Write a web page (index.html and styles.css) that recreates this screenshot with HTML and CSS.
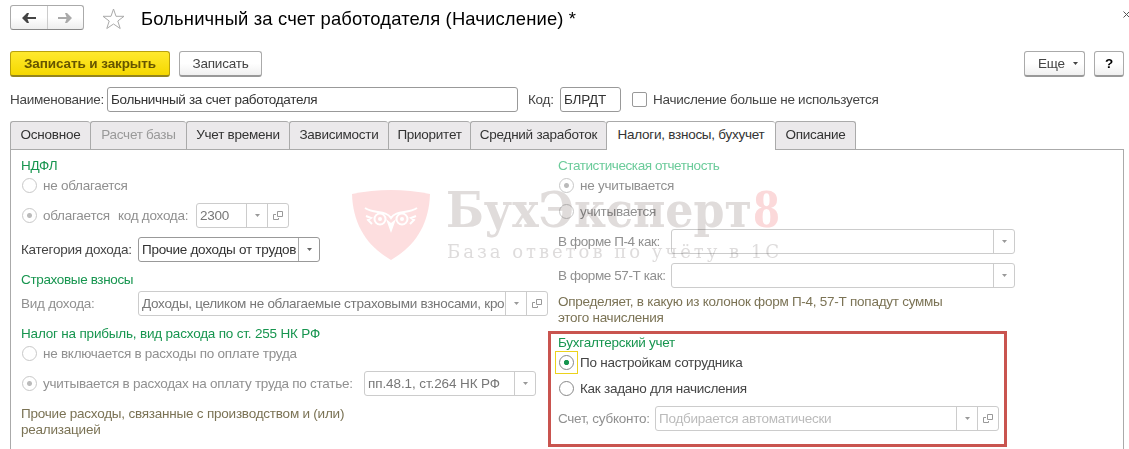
FILE: index.html
```
<!DOCTYPE html>
<html lang="ru">
<head>
    <meta charset="UTF-8">
    <title>Больничный за счет работодателя (Начисление)</title>
    <link rel="stylesheet" href="styles.css">
</head>
<body>
    <svg width="0" height="0" class="defs">
        <symbol id="open" viewBox="0 0 10 9">
            <path d="M4.5 .5h5v5h-5zM3 3.5H.5v5h5V7" fill="none" stroke="currentColor"/>
        </symbol>
        <symbol id="drop" viewBox="0 0 5 3">
            <path d="M0 0h5L2.5 3z" fill="currentColor"/>
        </symbol>
    </svg>

    <div class="header">
        <div class="nav">
            <div class="nav-button"><svg width="14" height="10" viewBox="0 0 14 10"><path d="M0 5 5 0H7L5.5 4H14V6H5.5L7 10H5z" fill="#444"/></svg></div>
            <div class="nav-button"><svg width="14" height="10" viewBox="0 0 14 10"><path d="M14 5 9 0H7L8.5 4H0V6H8.5L7 10H9z" fill="#aaa"/></svg></div>
        </div>
        <svg class="star" width="23" height="22" viewBox="0 0 23 22"><path d="M11.5 1 14 8.3H22L15.8 13 18.2 20.5 11.5 16 4.8 20.5 7.2 13 1 8.3H9z" fill="#fff" stroke="#aaa"/></svg>
        <div class="title">Больничный за счет работодателя (Начисление) *</div>
        <svg class="close" width="7" height="7" viewBox="0 0 7 7"><path d="M.5 .5l6 6M6.5 .5l-6 6" stroke="#555"/></svg>
    </div>

    <div class="toolbar">
        <div class="button primary">Записать и закрыть</div>
        <div class="button save">Записать</div>
        <div class="button more">Еще <svg width="5" height="3"><use href="#drop"/></svg></div>
        <div class="button help">?</div>
    </div>

    <div class="name-row">
        <span class="name-label">Наименование:</span>
        <div class="field name"><span class="value">Больничный за счет работодателя</span></div>
        <span class="code-label">Код:</span>
        <div class="field code"><span class="value">БЛРДТ</span></div>
        <div class="checkbox"></div>
        <span>Начисление больше не используется</span>
    </div>

    <div class="tabs">
        <div class="tab t1">Основное</div>
        <div class="tab t2 off">Расчет базы</div>
        <div class="tab t3">Учет времени</div>
        <div class="tab t4">Зависимости</div>
        <div class="tab t5">Приоритет</div>
        <div class="tab t6">Средний заработок</div>
        <div class="tab t7 active">Налоги, взносы, бухучет</div>
        <div class="tab t8">Описание</div>
    </div>

    <div class="panel">
        <div class="left">
            <div class="heading">НДФЛ</div>
            <div class="radio-row off"><i class="radio"></i>не облагается</div>
            <div class="row off after-radio">
                <i class="radio checked"></i><span class="taxed">облагается</span><span class="income-code">код дохода:</span>
                <div class="field f-code"><span class="value">2300</span><b><svg width="5" height="3"><use href="#drop"/></svg></b><b><svg width="10" height="9"><use href="#open"/></svg></b></div>
            </div>
            <div class="row category">
                <span class="label">Категория дохода:</span>
                <div class="field f-category"><span class="value">Прочие доходы от трудов</span><b><svg width="5" height="3"><use href="#drop"/></svg></b></div>
            </div>
            <div class="heading insurance">Страховые взносы</div>
            <div class="row off income">
                <span class="label">Вид дохода:</span>
                <div class="field f-income"><span class="value">Доходы, целиком не облагаемые страховыми взносами, кро</span><b><svg width="5" height="3"><use href="#drop"/></svg></b><b><svg width="10" height="9"><use href="#open"/></svg></b></div>
            </div>
            <div class="heading profit">Налог на прибыль, вид расхода по ст. 255 НК РФ</div>
            <div class="radio-row off"><i class="radio"></i>не включается в расходы по оплате труда</div>
            <div class="row off after-radio">
                <i class="radio checked"></i><span class="article">учитывается в расходах на оплату труда по статье:</span>
                <div class="field f-article"><span class="value">пп.48.1, ст.264 НК РФ</span><b><svg width="5" height="3"><use href="#drop"/></svg></b></div>
            </div>
            <div class="note expenses">Прочие расходы, связанные с производством и (или)<br>реализацией</div>
        </div>

        <div class="right">
            <div class="heading pale">Статистическая отчетность</div>
            <div class="radio-row off"><i class="radio checked"></i>не учитывается</div>
            <div class="radio-row off next"><i class="radio"></i>учитывается</div>
            <div class="row off after-radio">
                <span class="form-label">В форме П-4 как:</span>
                <div class="field f-form"><span class="value"></span><b><svg width="5" height="3"><use href="#drop"/></svg></b></div>
            </div>
            <div class="row off form57">
                <span class="form-label">В форме 57-Т как:</span>
                <div class="field f-form"><span class="value"></span><b><svg width="5" height="3"><use href="#drop"/></svg></b></div>
            </div>
            <div class="note forms">Определяет, в какую из колонок форм П-4, 57-Т попадут суммы<br>этого начисления</div>
            <div class="marked">
                <div class="heading">Бухгалтерский учет</div>
                <div class="radio-row"><span class="focus"><i class="radio checked"></i></span>По настройкам сотрудника</div>
                <div class="radio-row next"><i class="radio"></i>Как задано для начисления</div>
                <div class="row off account">
                    <span class="account-label">Счет, субконто:</span>
                    <div class="field f-account"><span class="value">Подбирается автоматически</span><b><svg width="5" height="3"><use href="#drop"/></svg></b><b><svg width="10" height="9"><use href="#open"/></svg></b></div>
                </div>
            </div>
        </div>
    </div>

    <svg class="watermark" width="430" height="76" viewBox="0 0 430 76">
        <path d="M0 4Q39-4 78 4C77 35 63 56 39 70 15 56 1 35 0 4z" fill="#fddedf"/>
        <g fill="none" stroke="#fff" stroke-width="2">
            <path d="M13 18C22 24 34 20 39 28 44 20 56 24 65 18"/>
            <circle cx="28" cy="29" r="5.5"/><circle cx="50" cy="29" r="5.5"/>
            <path d="M14 26l5 2-3 2 4 4M64 26l-5 2 3 2-4 4"/>
        </g>
        <circle cx="28" cy="29" r="2" fill="#fff"/><circle cx="50" cy="29" r="2" fill="#fff"/>
        <path d="M34 29l5 14 5-14-5 4z" fill="#fff"/>
        <text x="94" y="37" class="brand" textLength="306" lengthAdjust="spacingAndGlyphs">БухЭксперт</text>
        <text x="401" y="37" class="brand eight" textLength="27" lengthAdjust="spacingAndGlyphs">8</text>
        <text x="95" y="68" class="slogan" textLength="332">База ответов по учёту в 1С</text>
    </svg>
</body>
</html>
```

FILE: styles.css
```
* {
    box-sizing: border-box;
}
body {
    margin: 0;
    height: 449px;
    overflow: hidden;
    position: relative;
    background-color: #fff;
    color: #444;
    font-family: "Liberation Sans", Arial, sans-serif;
    font-size: 13.5px;
    letter-spacing: -0.26px;
    line-height: 17px;
    white-space: nowrap;
}
.defs {
    position: absolute;
}
.header {
    display: flex;
    height: 39px;
    padding: 5px 0 0 10px;
}
.nav {
    display: flex;
    width: 74px;
    height: 25px;
    border: 1px solid #aaa;
    border-bottom-color: #888;
    border-radius: 3px;
    background: linear-gradient(#fff 50%, #eee);
}
.nav-button {
    flex: 1;
    display: flex;
    align-items: center;
    justify-content: center;
}
.nav-button + .nav-button {
    border-left: 1px solid #ccc;
}
.star {
    margin: 3px 0 0 18px;
}
.title {
    margin: 2px 0 0 16px;
    color: #000;
    font-size: 18.4px;
    line-height: 24px;
    letter-spacing: 0.16px;
}
.close {
    margin: 6px -1px 0 auto;
}
.toolbar {
    display: flex;
    height: 38px;
    padding: 12px 5px 0 10px;
}
.button {
    height: 26px;
    border: 1px solid #aaa;
    border-bottom: 2px solid #999;
    border-radius: 3px;
    background: linear-gradient(#fff 50%, #f0f0f0);
    line-height: 24px;
    text-align: center;
    letter-spacing: -0.2px;
}
.primary {
    width: 160px;
    background: linear-gradient(#ffe92e, #f5d800);
    border-color: #b9a10c;
    border-bottom-color: #94851d;
    color: #665500;
    font-weight: bold;
    letter-spacing: -0.1px;
}
.save {
    width: 83px;
    margin-left: 9px;
}
.more {
    display: flex;
    align-items: center;
    justify-content: center;
    gap: 8px;
    width: 61px;
    margin-left: auto;
    padding-left: 7px;
}
.help {
    width: 30px;
    margin-left: 9px;
    color: #000;
    font-weight: bold;
}
.name-row {
    display: flex;
    align-items: center;
    height: 25px;
    margin: 10px 0 9px 10px;
}
.name-label {
    width: 97px;
}
.code-label {
    width: 42px;
    padding-left: 10px;
}
.field {
    display: flex;
    height: 25px;
    border: 1px solid #999;
    border-radius: 3px;
    background-color: #fff;
    color: #333;
    line-height: 23px;
}
.field .value {
    flex: 1;
    min-width: 0;
    overflow: hidden;
    padding-left: 3px;
}
.field b {
    display: flex;
    align-items: center;
    justify-content: center;
    width: 21px;
    border-left: 1px solid #aaa;
    color: #666;
}
.name {
    width: 411px;
    letter-spacing: -0.32px;
}
.code {
    width: 61px;
}
.checkbox {
    width: 15px;
    height: 15px;
    margin: 0 6px 0 11px;
    border: 1px solid #999;
    border-radius: 2px;
}
.tabs {
    display: flex;
    height: 28px;
    margin-left: 10px;
    color: #333;
}
.tab {
    border: 1px solid #aaa;
    border-right: none;
    border-bottom: none;
    border-radius: 3px 3px 0 0;
    background-color: #ebe9eb;
    line-height: 26px;
    text-align: center;
}
.tab.off {
    color: #999;
}
.tab.active {
    height: 29px;
    background-color: #fff;
    z-index: 1;
}
.t1 { width: 80px; }
.t2 { width: 96px; }
.t3 { width: 103px; }
.t4 { width: 99px; }
.t5 { width: 82px; }
.t6 { width: 136px; }
.t7 { width: 169px; }
.t8 {
    width: 81px;
    border-right: 1px solid #aaa;
}
.panel {
    display: flex;
    width: 1114px;
    height: 310px;
    margin-left: 10px;
    padding: 8px 0 0 10px;
    border: 1px solid #aaa;
    border-bottom: none;
}
.left {
    width: 527px;
}
.right {
    width: 467px;
    padding-left: 10px;
}
.heading {
    height: 16px;
    line-height: 16px;
    color: #17954f;
}
.pale {
    color: #6bcb9a;
    letter-spacing: -0.42px;
}
.row,
.radio-row {
    display: flex;
    align-items: center;
}
.row {
    height: 25px;
}
.radio-row {
    height: 23px;
}
.next {
    margin-top: 3px;
}
.radio {
    flex: none;
    width: 15px;
    height: 15px;
    margin: 0 6px 0 1px;
    border: 1px solid #888;
    border-radius: 50%;
    background: #fff;
}
.radio.checked {
    background: radial-gradient(circle, #17954f 2.2px, #fff 3px);
}
.off {
    color: #909090;
}
.off .radio {
    border-color: #c8c8c8;
}
.off .radio.checked {
    background: radial-gradient(circle, #bbb 2px, #fff 3px);
}
.off .field {
    border-color: #ccc;
    color: #777;
}
.off .field b {
    border-color: #ccc;
    color: #999;
}
.after-radio {
    margin-top: 6px;
}
.taxed {
    width: 75px;
}
.income-code {
    width: 78px;
}
.label {
    width: 117px;
}
.category,
.form57 {
    margin-top: 9px;
}
.insurance,
.profit {
    margin-top: 10px;
}
.insurance {
    letter-spacing: -0.35px;
}
.profit {
    letter-spacing: -0.19px;
}
.income {
    margin-top: 3px;
}
.f-code {
    width: 93px;
}
.f-category {
    width: 182px;
}
.f-income {
    width: 410px;
    letter-spacing: -0.29px;
}
.article {
    width: 321px;
}
.f-article {
    width: 172px;
    letter-spacing: -0.1px;
}
.note {
    line-height: 16px;
    color: #7b7355;
}
.expenses {
    margin-top: 10px;
    letter-spacing: -0.22px;
}
.form-label {
    width: 113px;
    letter-spacing: -0.4px;
}
.f-form {
    width: 344px;
}
.forms {
    margin-top: 6px;
}
.marked {
    width: 459px;
    height: 116px;
    margin: 5px 0 0 -10px;
    padding: 1px 0 0 7px;
    border: 3px solid #c9544f;
}
.focus {
    display: flex;
    flex: none;
    align-items: center;
    width: 23px;
    height: 23px;
    margin: 0 2px 0 -3px;
    padding-left: 2px;
    border: 1px solid #ecd21c;
}
.account {
    margin-top: 6px;
}
.account-label {
    width: 97px;
}
.f-account {
    width: 344px;
}
.off .f-account {
    color: #bbb;
}
.watermark {
    position: absolute;
    left: 352px;
    top: 190px;
    mix-blend-mode: multiply;
}
.brand {
    font-family: "DejaVu Serif", serif;
    font-size: 49px;
    font-weight: bold;
    letter-spacing: 0;
    fill: #e0dcdb;
}
.eight {
    fill: #fbd9da;
}
.slogan {
    font-family: "DejaVu Serif", serif;
    font-size: 18px;
    letter-spacing: 0;
    fill: #dedcdc;
}
```
